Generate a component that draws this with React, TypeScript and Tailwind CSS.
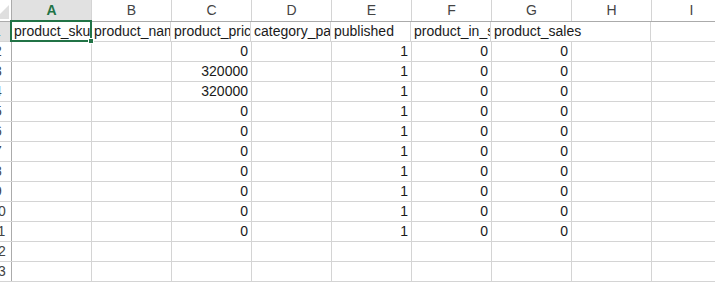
import React from 'react'

const COLS = ['A', 'B', 'C', 'D', 'E', 'F', 'G', 'H', 'I']

type Cell = { v: string; num?: boolean; spill?: boolean }

const header: Cell[] = [
  { v: 'product_sku' },
  { v: 'product_name' },
  { v: 'product_price' },
  { v: 'category_path' },
  { v: 'published' },
  { v: 'product_in_stock' },
  { v: 'product_sales', spill: true },
]

const prices = ['0', '320000', '320000', '0', '0', '0', '0', '0', '0', '0']

const rows: Cell[][] = [
  header,
  ...prices.map((p) => [
    { v: '' },
    { v: '' },
    { v: p, num: true },
    { v: '' },
    { v: '1', num: true },
    { v: '0', num: true },
    { v: '0', num: true },
  ]),
  [],
  [],
]

export default function App() {
  return (
    <div
      className="relative w-[715px] h-[283px] overflow-hidden bg-white text-[14px] text-[#1a1a1a]"
      style={{ fontFamily: '"Liberation Sans", Arial, sans-serif' }}
    >
      {/* Column headers */}
      <div className="flex h-[22px] border-b border-[#ababab] bg-white">
        <div className="relative w-[12px] shrink-0 border-r border-[#ababab] bg-white overflow-hidden">
          {/* corner triangle */}
          <div className="absolute right-[2px] bottom-[2px] w-0 h-0 border-l-[14px] border-l-transparent border-b-[14px] border-b-[#dfdfdf]" />
        </div>
        {COLS.map((c) => (
          <div
            key={c}
            className={
              c === 'A'
                ? 'w-[80px] shrink-0 flex items-center justify-center border-r border-[#d4d4d4] bg-[#e1e1e1] border-b-2 border-b-[#217346] -mb-px text-[#217346] font-bold'
                : 'w-[80px] shrink-0 flex items-center justify-center border-r border-[#d4d4d4] text-[#444]'
            }
          >
            {c}
          </div>
        ))}
      </div>

      {/* Rows */}
      {rows.map((r, i) => (
        <div key={i} className="flex h-[20px] border-b border-[#d4d4d4]">
          <div
            className={
              i === 0
                ? 'w-[12px] shrink-0 flex justify-end overflow-hidden border-r-2 border-[#217346] bg-[#e1e1e1] -mr-px text-[#217346]'
                : 'w-[12px] shrink-0 flex justify-end overflow-hidden border-r border-[#ababab] bg-white text-[#444]'
            }
          >
            <div className="w-[26px] shrink-0 text-center leading-[19px]">{i + 1}</div>
          </div>
          {COLS.map((c, j) => {
            const cell = r[j]
            return (
              <div
                key={c}
                className={
                  cell?.spill
                    ? 'w-[80px] shrink-0 flex items-end px-[3px] border-r border-transparent whitespace-nowrap overflow-visible relative z-10'
                    : cell?.num
                    ? 'w-[80px] shrink-0 flex items-end justify-end px-[3px] border-r border-[#d4d4d4] whitespace-nowrap overflow-hidden'
                    : 'w-[80px] shrink-0 flex items-end px-[3px] border-r border-[#d4d4d4] whitespace-nowrap overflow-hidden'
                }
              >
                <span className="leading-[19px]">{cell?.v ?? ''}</span>
              </div>
            )
          })}
        </div>
      ))}

      {/* Active cell A1 */}
      <div className="absolute left-[10px] top-[20px] w-[82px] h-[22px] border-2 border-[#217346] pointer-events-none" />
      <div className="absolute left-[88px] top-[38px] w-[6px] h-[6px] bg-[#217346] border border-white" />
    </div>
  )
}
